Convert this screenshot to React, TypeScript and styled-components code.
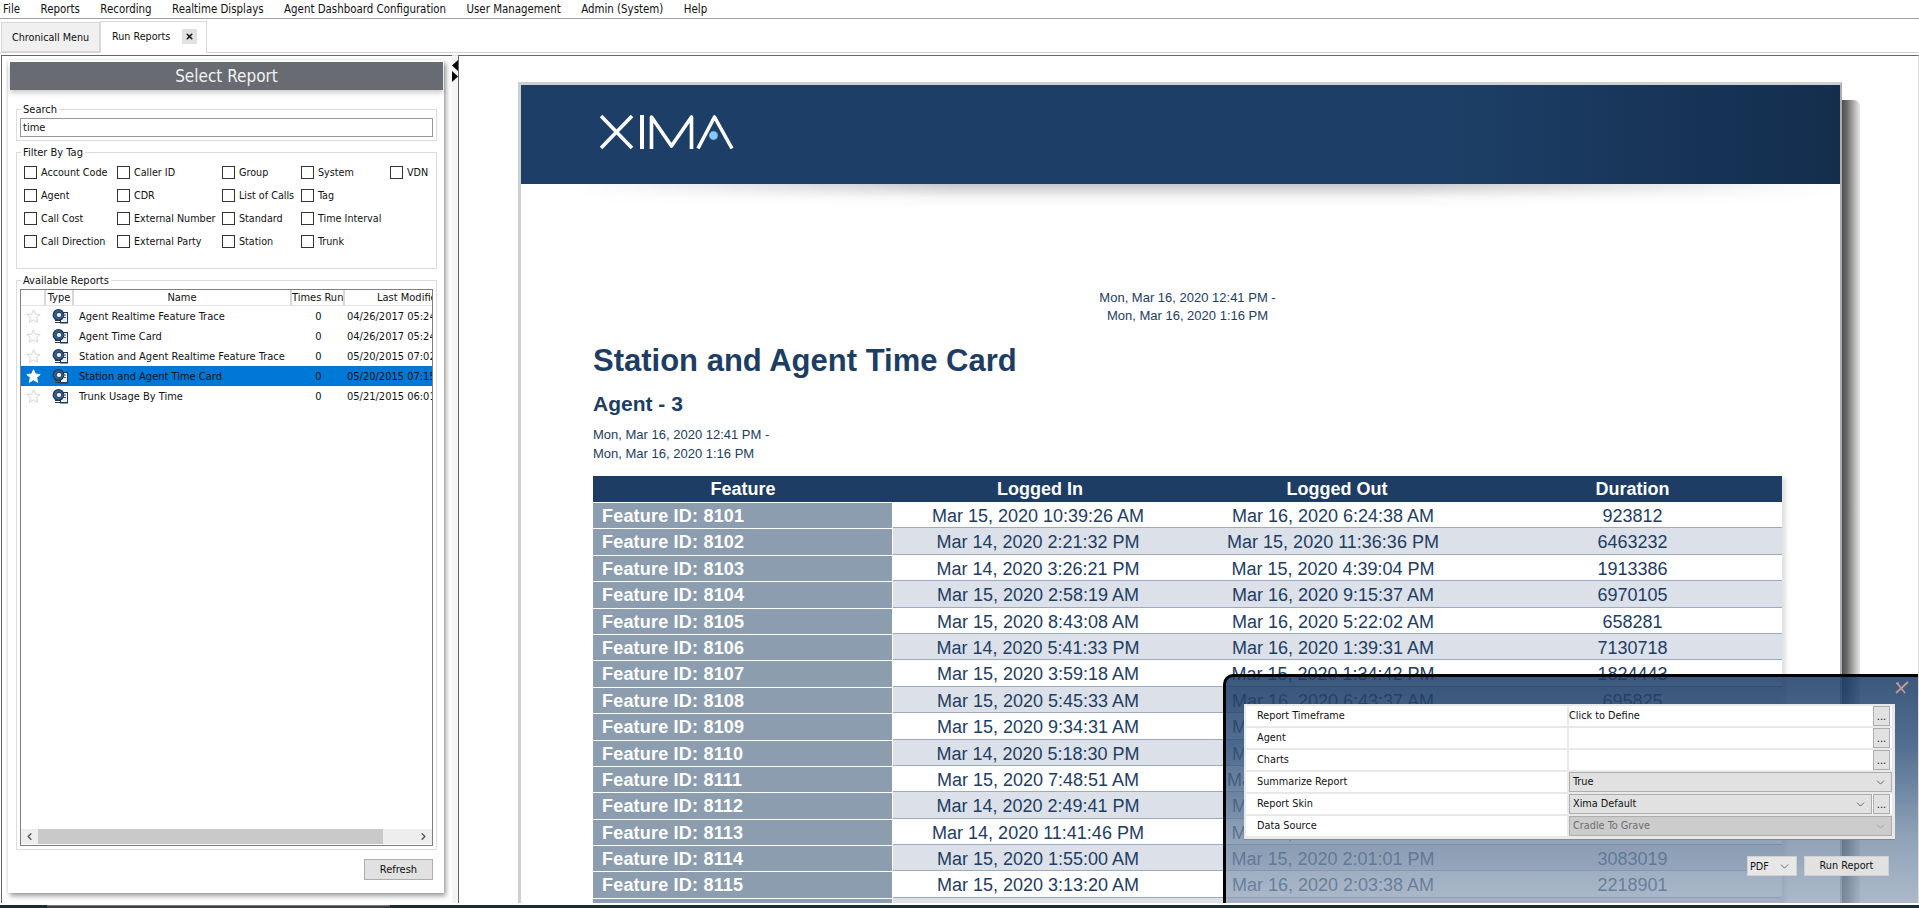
import React from "react";
import styled, { createGlobalStyle } from "styled-components";
import { ChevronDown, ChevronLeft, ChevronRight, X } from "lucide-react";

const UI_FONT = `"DejaVu Sans Condensed", "DejaVu Sans", sans-serif`;
const REPORT_FONT = `"Liberation Sans", Arial, sans-serif`;

const Global = createGlobalStyle`
  html, body { margin: 0; padding: 0; height: 100%; overflow: hidden; background: #fff; }
  #root { height: 100%; }
  * { box-sizing: border-box; }
`;

const Shell = styled.div`
  height: 908px;
  display: flex;
  flex-direction: column;
  font-family: ${UI_FONT};
  font-stretch: condensed;
  font-size: 11px;
  color: #111;
  background: #fff;
`;

const MenuBar = styled.nav`
  height: 19px;
  flex: none;
  display: flex;
  align-items: center;
  gap: 20.5px;
  padding-left: 3px;
  border-bottom: 1px solid #a0a0a0;
  font-size: 11.4px;
`;

const TabBar = styled.div`
  height: 34px;
  flex: none;
  display: flex;
  align-items: flex-end;
  padding-left: 1px;
  border-bottom: 1px solid #d4d4d4;
`;

const Tab = styled.div<{ $active?: boolean }>`
  display: flex;
  align-items: center;
  gap: 11px;
  white-space: nowrap;
  font-size: 10.7px;
  height: ${(p) => (p.$active ? "32px" : "30px")};
  width: ${(p) => (p.$active ? "107px" : "99px")};
  padding-left: ${(p) => (p.$active ? "11px" : "10px")};
  margin-bottom: ${(p) => (p.$active ? "-1px" : "0")};
  padding-bottom: ${(p) => (p.$active ? "3px" : "0")};
  background: ${(p) => (p.$active ? "#fff" : "#f0f0f0")};
  border: 1px solid #d9d9d9;
  border-bottom: ${(p) => (p.$active ? "none" : "1px solid #d9d9d9")};
`;

const TabClose = styled.span`
  width: 15px;
  height: 15px;
  margin-left: 1px;
  display: flex;
  align-items: center;
  justify-content: center;
  background: #e1e1e1;
`;

const Workspace = styled.main`
  flex: 1;
  min-height: 0;
  display: flex;
  padding: 2px 0 2px 1px;
`;

const LeftPane = styled.section`
  width: 451px;
  flex: none;
  border-top: 1px solid #666;
  border-left: 1px solid #666;
  padding: 4px 8px 10px 6px;
  display: flex;
  flex-direction: column;
`;

const Splitter = styled.div`
  width: 6px;
  flex: none;
  background: #f4f4f4;
  border-top: 1px solid #ddd;
  display: flex;
  flex-direction: column;
  padding-top: 4px;
`;

const Card = styled.div`
  flex: 1;
  min-height: 0;
  background: #fff;
  display: flex;
  flex-direction: column;
  padding: 2px 7px 13px 8px;
  box-shadow: 2px 3px 5px rgba(0, 0, 0, 0.38), 0 0 2px rgba(0, 0, 0, 0.12);
`;

const CardHeader = styled.h2`
  flex: none;
  height: 28px;
  margin: 0 -6px 12px -6px;
  background: #686b72;
  color: #f2f2f2;
  font-size: 17px;
  font-weight: 400;
  line-height: 28px;
  text-align: center;
  box-shadow: 0 3px 5px rgba(0, 0, 0, 0.2);
`;

const Group = styled.fieldset<{ $height?: number; $grow?: boolean }>`
  margin: 0 0 4px;
  padding: 2px 3px 3px;
  min-width: 0;
  border: 1px solid #dcdcdc;
  ${(p) => (p.$height ? `height: ${p.$height}px; flex: none;` : "")}
  ${(p) => (p.$grow ? "flex: 1; min-height: 0; display: flex; flex-direction: column; margin: 0;" : "")}
`;

const GroupTitle = styled.legend`
  padding: 0 2px;
  margin-left: 1px;
  height: 14px;
  line-height: 15px;
  font-size: 11px;
`;

const SearchInput = styled.input`
  display: block;
  width: 100%;
  height: 19px;
  border: 1px solid #999;
  padding: 0 2px;
  font: inherit;
  font-stretch: condensed;
  font-size: 11px;
  color: #111;
  outline: none;
`;

const TagGrid = styled.div`
  display: grid;
  grid-template-columns: 93px 105px 79px 89px auto;
  grid-auto-rows: 23px;
  padding-left: 4px;
  font-size: 10.7px;
`;

const Tag = styled.label`
  display: flex;
  align-items: center;
  gap: 4px;
  white-space: nowrap;
`;

const TagBox = styled.span`
  width: 13px;
  height: 13px;
  flex: none;
  background: #fff;
  border: 1px solid #333;
`;

const ListFrame = styled.div`
  flex: 1;
  min-height: 0;
  width: 413px;
  display: flex;
  flex-direction: column;
  overflow: hidden;
  border: 1px solid #7f7f7f;
`;

const listColumns = "25px 28px 218px 53px 132px";

const ListHead = styled.div`
  flex: none;
  display: grid;
  grid-template-columns: ${listColumns};
  width: 456px;
  height: 16px;
  border-bottom: 1px solid #e4e4e4;
`;

const HeadCell = styled.div`
  text-align: center;
  line-height: 15px;
  white-space: nowrap;
  overflow: hidden;
  border-right: 2px solid #d8d8d8;
`;

const ListRow = styled.div<{ $selected?: boolean }>`
  flex: none;
  display: grid;
  grid-template-columns: ${listColumns};
  width: 456px;
  height: 20px;
  align-items: center;
  background: ${(p) => (p.$selected ? "#0078d7" : "transparent")};
`;

const IconCell = styled.div`
  display: flex;
  justify-content: center;
  align-items: center;
`;

const NameCell = styled.div`
  padding-left: 5px;
  white-space: nowrap;
`;

const CountCell = styled.div`
  text-align: center;
`;

const DateCell = styled.div`
  padding-left: 2px;
  white-space: nowrap;
`;

const ListFill = styled.div`
  flex: 1;
`;

const HScroll = styled.div`
  flex: none;
  height: 15px;
  margin-bottom: 1px;
  display: flex;
  align-items: center;
  background: #eee;
`;

const ScrollEnd = styled.span`
  width: 17px;
  flex: none;
  display: flex;
  justify-content: center;
  color: #555;
`;

const ScrollThumb = styled.span`
  width: 345px;
  height: 15px;
  flex: none;
  background: #c9c9c9;
`;

const ScrollSpace = styled.span`
  flex: 1;
`;

const CardFooter = styled.div`
  flex: none;
  display: flex;
  justify-content: flex-end;
  padding: 9px 4px 0 0;
`;

const Button = styled.button<{ $width: number }>`
  width: ${(p) => p.$width}px;
  height: 21px;
  padding: 0;
  font-family: ${UI_FONT};
  font-stretch: condensed;
  font-size: 11px;
  color: #111;
  background: #e1e1e1;
  border: 1px solid #adadad;
`;

const ReportPane = styled.section`
  flex: 1;
  min-width: 0;
  position: relative;
  isolation: isolate;
  overflow: hidden;
  border-top: 1px solid #666;
  border-left: 1px solid #666;
  border-right: 1px solid #ddd;
  padding: 26px 0 0 59px;
  background: #fff;
`;

const Sheet = styled.article`
  position: relative;
  width: 1324px;
  min-height: 900px;
  background: #fff;
  border: 3px solid #cfcfcf;
  border-right: 2px solid #a9adb2;
  border-bottom: none;
  font-family: ${REPORT_FONT};
  font-stretch: normal;
  color: #1d3d64;

  &::before {
    content: "";
    position: absolute;
    z-index: -1;
    left: 100%;
    top: 15px;
    bottom: 0;
    width: 20px;
    border-radius: 0 6px 0 0;
    background: linear-gradient(90deg, #404040, #6d6d6d 35%, #a8a8a8 65%, #d4d4d4 88%, #e6e6e6);
  }
`;

const Banner = styled.header`
  position: relative;
  height: 99px;
  padding: 30px 0 0 79px;
  background: linear-gradient(90deg, #1d3f67 0%, #1d3f67 70%, #163355 90%, #142d4d 100%);

  &::after {
    content: "";
    position: absolute;
    top: 100%;
    left: 50px;
    right: 0;
    height: 24px;
    background: linear-gradient(180deg, rgba(0, 0, 0, 0.22), rgba(0, 0, 0, 0.03) 60%, transparent);
    mask-image: linear-gradient(90deg, transparent, #000 30%, #000 65%, transparent);
  }
`;

const SheetBody = styled.div`
  padding: 105px 58px 0 72px;
`;

const DateLines = styled.div<{ $center?: boolean }>`
  font-size: 13px;
  line-height: ${(p) => (p.$center ? "18px" : "19px")};
  text-align: ${(p) => (p.$center ? "center" : "left")};
  margin-top: ${(p) => (p.$center ? "0" : "9px")};
`;

const ReportTitle = styled.h1`
  margin: 19px 0 0;
  font-size: 31px;
  line-height: 34px;
  font-weight: 700;
`;

const ReportSubtitle = styled.h3`
  margin: 14px 0 0;
  font-size: 21px;
  line-height: 24px;
  font-weight: 700;
`;

const ReportTable = styled.div`
  margin-top: 13px;
  width: 1189px;
  box-shadow: 4px 2px 4px rgba(0, 0, 0, 0.12);
`;

const TableHead = styled.div`
  display: grid;
  grid-template-columns: 300px 294px 300px 291px;
  height: 26px;
  background: #1d3d64;
  color: #fff;
  font-size: 18px;
  font-weight: 700;
  line-height: 26px;
  text-align: center;
`;

const TableRow = styled.div<{ $alt: boolean }>`
  display: grid;
  grid-template-columns: 300px 290px 300px 299px;
  grid-template-rows: 25.4px;
  height: 26.4px;
  background: ${(p) => (p.$alt ? "#dce1e9" : "#fff")};
  font-size: 18px;
  line-height: 28px;
  text-align: center;
  border-bottom: 1px solid #9aabc0;
`;

const FeatureCell = styled.div`
  background: #8c9db0;
  color: #fff;
  font-weight: 700;
  letter-spacing: 0.2px;
  text-align: left;
  padding-left: 9px;
  margin-bottom: -1px;
  border-top: 1px solid #fff;
  border-right: 1px solid #fff;
  line-height: 26px;
`;

const ValueCell = styled.div`
  white-space: nowrap;
`;

const Drawer = styled.aside`
  position: absolute;
  left: 764px;
  right: -1px;
  top: 618px;
  bottom: 0;
  border: 3px solid #000;
  border-right: none;
  border-bottom: none;
  border-radius: 10px 0 0 0;
  padding: 27px 24px 0 18px;
  background: linear-gradient(180deg, rgba(28, 60, 102, 0.86) 0%, rgba(48, 82, 122, 0.84) 30%, rgba(108, 132, 160, 0.76) 70%, rgba(140, 158, 182, 0.72) 100%);
  font-family: ${UI_FONT};
  font-stretch: condensed;
  font-size: 10.8px;
  color: #111;
`;

const DrawerClose = styled.svg`
  position: absolute;
  top: 4px;
  right: 10px;
  width: 14px;
  height: 14px;
`;

const PropGrid = styled.div`
  display: grid;
  grid-template-columns: 321px 323px;
  grid-auto-rows: 20px;
  gap: 2px;
  width: 651px;
  padding: 2px 3px 3px 2px;
  background: #e9e9e9;
  box-shadow: 0 1px 0 #888;
`;

const PropLabel = styled.div`
  background: #fff;
  padding-left: 11px;
  line-height: 20px;
`;

const PropValue = styled.div`
  background: #fff;
  display: flex;
  line-height: 20px;
  min-width: 0;
`;

const ValueText = styled.span`
  flex: 1;
`;

const MoreButton = styled.span`
  width: 17px;
  height: 20px;
  flex: none;
  margin: 0 2px 0 1px;
  background: #e1e1e1;
  border: 1px solid #adadad;
  text-align: center;
  line-height: 20px;
  font-size: 11px;
`;

const Select = styled.div<{ $disabled?: boolean }>`
  flex: 1;
  min-width: 0;
  height: 20px;
  display: flex;
  align-items: center;
  justify-content: space-between;
  padding: 0 4px 0 3px;
  background: ${(p) => (p.$disabled ? "#cccccc" : "#e1e1e1")};
  color: ${(p) => (p.$disabled ? "#6d6d6d" : "#111")};
  border: 1px solid #adadad;
`;

const DrawerActions = styled.div`
  display: flex;
  justify-content: flex-end;
  gap: 7px;
  margin-top: 17px;
  padding-right: 6px;
  width: 651px;
`;

const FormatSelect = styled.div`
  width: 50px;
  height: 20px;
  display: flex;
  align-items: center;
  justify-content: space-between;
  padding: 0 5px 0 2px;
  background: #e7e7e7;
  border: 1px solid #d0d0d0;
`;

const RunButton = styled.div`
  width: 85px;
  height: 20px;
  background: #e1e1e1;
  border: 1px solid #d0d0d0;
  text-align: center;
  line-height: 18px;
`;

const TaskBar = styled.footer`
  flex: none;
  height: 3px;
  background: #1b2d33;
  display: flex;
  padding-left: 47px;
`;

const TaskItem = styled.span`
  width: 343px;
  background: #3a3f44;
  border-top: 1px solid #777;
`;

const Arrow: React.FC<{ left?: boolean }> = ({ left }) => (
  <svg width="6" height="11" viewBox="0 0 6 11">
    <polygon points={left ? "6,0 0,5.5 6,11" : "0,0 6,5.5 0,11"} fill="#000" />
  </svg>
);

const Star: React.FC<{ filled?: boolean }> = ({ filled }) => (
  <svg width="15" height="14" viewBox="0 0 15 14">
    <polygon
      points="7.5,0.8 9.4,5.1 14.2,5.5 10.6,8.6 11.7,13.3 7.5,10.8 3.3,13.3 4.4,8.6 0.8,5.5 5.6,5.1"
      fill={filled ? "#fff" : "#fbfbfb"}
      stroke={filled ? "#fff" : "#d6d6d6"}
      strokeWidth="1"
    />
  </svg>
);

const ReportIcon: React.FC = () => (
  <svg width="17" height="15" viewBox="0 0 17 15">
    <rect x="8.5" y="3.5" width="7" height="10.5" fill="#eef2f7" stroke="#26384f" />
    <path d="M3 11.5h6M3 13.5h12" stroke="#26384f" strokeWidth="1" />
    <circle cx="6.5" cy="6" r="5.3" fill="#2f5f93" stroke="#1e3550" strokeWidth="1.2" />
    <ellipse cx="7" cy="6" rx="2.8" ry="2.6" fill="#e4ecf4" stroke="#1e3550" strokeWidth="0.9" />
    <path d="M11 6h3M11 8.5h3" stroke="#46607c" strokeWidth="1" />
  </svg>
);

const Chevron: React.FC<{ muted?: boolean }> = ({ muted }) => (
  <ChevronDown size={13} strokeWidth={1.4} color={muted ? "#999" : "#444"} />
);

const Logo: React.FC = () => (
  <svg width="134" height="35" viewBox="0 0 134 35" fill="none" stroke="#fff" strokeWidth="3.6">
    <path d="M1 1l31 32M32 1L1 33" />
    <path d="M42 0v34" strokeWidth="4" />
    <path d="M51.5 34V2l20 29 20-29v32" strokeLinejoin="round" />
    <path d="M98 33.5L114.5 2 132 33.5" strokeLinejoin="round" />
    <circle cx="113.5" cy="20.5" r="4.8" fill="#86c9f2" stroke="#1d3f67" strokeWidth="1" />
  </svg>
);

const menus = ["File", "Reports", "Recording", "Realtime Displays", "Agent Dashboard Configuration", "User Management", "Admin (System)", "Help"];

const tags = [
  "Account Code", "Caller ID", "Group", "System", "VDN",
  "Agent", "CDR", "List of Calls", "Tag", "",
  "Call Cost", "External Number", "Standard", "Time Interval", "",
  "Call Direction", "External Party", "Station", "Trunk", "",
];

const reports = [
  { name: "Agent Realtime Feature Trace", date: "04/26/2017 05:24 PM" },
  { name: "Agent Time Card", date: "04/26/2017 05:24 PM" },
  { name: "Station and Agent Realtime Feature Trace", date: "05/20/2015 07:02 PM" },
  { name: "Station and Agent Time Card", date: "05/20/2015 07:15 PM", selected: true },
  { name: "Trunk Usage By Time", date: "05/21/2015 06:01 PM" },
];

const rows = [
  ["8101", "Mar 15, 2020 10:39:26 AM", "Mar 16, 2020 6:24:38 AM", "923812"],
  ["8102", "Mar 14, 2020 2:21:32 PM", "Mar 15, 2020 11:36:36 PM", "6463232"],
  ["8103", "Mar 14, 2020 3:26:21 PM", "Mar 15, 2020 4:39:04 PM", "1913386"],
  ["8104", "Mar 15, 2020 2:58:19 AM", "Mar 16, 2020 9:15:37 AM", "6970105"],
  ["8105", "Mar 15, 2020 8:43:08 AM", "Mar 16, 2020 5:22:02 AM", "658281"],
  ["8106", "Mar 14, 2020 5:41:33 PM", "Mar 16, 2020 1:39:31 AM", "7130718"],
  ["8107", "Mar 15, 2020 3:59:18 AM", "Mar 15, 2020 1:34:42 PM", "1824443"],
  ["8108", "Mar 15, 2020 5:45:33 AM", "Mar 16, 2020 6:43:37 AM", "695825"],
  ["8109", "Mar 15, 2020 9:34:31 AM", "Mar 16, 2020 3:12:40 AM", "2241190"],
  ["8110", "Mar 14, 2020 5:18:30 PM", "Mar 15, 2020 8:27:15 AM", "3180452"],
  ["8111", "Mar 15, 2020 7:48:51 AM", "Mar 15, 2020 11:20:14 PM", "1568230"],
  ["8112", "Mar 14, 2020 2:49:41 PM", "Mar 16, 2020 4:05:22 AM", "4405118"],
  ["8113", "Mar 14, 2020 11:41:46 PM", "Mar 15, 2020 6:52:09 PM", "2743906"],
  ["8114", "Mar 15, 2020 1:55:00 AM", "Mar 15, 2020 2:01:01 PM", "3083019"],
  ["8115", "Mar 15, 2020 3:13:20 AM", "Mar 16, 2020 2:03:38 AM", "2218901"],
  ["8116", "Mar 14, 2020 6:20:11 PM", "Mar 15, 2020 9:44:27 AM", "2541720"],
];

export default function App() {
  return (
    <Shell>
      <Global />
      <MenuBar>
        {menus.map((m) => (
          <span key={m}>{m}</span>
        ))}
      </MenuBar>
      <TabBar>
        <Tab>Chronicall Menu</Tab>
        <Tab $active>
          Run Reports
          <TabClose>
            <X size={9} strokeWidth={4} color="#111" />
          </TabClose>
        </Tab>
      </TabBar>
      <Workspace>
        <LeftPane>
          <Card>
            <CardHeader>Select Report</CardHeader>
            <Group $height={39}>
              <GroupTitle>Search</GroupTitle>
              <SearchInput defaultValue="time" />
            </Group>
            <Group $height={124}>
              <GroupTitle>Filter By Tag</GroupTitle>
              <TagGrid>
                {tags.map((t, i) =>
                  t ? (
                    <Tag key={t}>
                      <TagBox />
                      {t}
                    </Tag>
                  ) : (
                    <span key={i} />
                  )
                )}
              </TagGrid>
            </Group>
            <Group $grow>
              <GroupTitle>Available Reports</GroupTitle>
              <ListFrame>
                <ListHead>
                  <HeadCell />
                  <HeadCell>Type</HeadCell>
                  <HeadCell>Name</HeadCell>
                  <HeadCell>Times Run</HeadCell>
                  <HeadCell>Last Modified</HeadCell>
                </ListHead>
                {reports.map((r) => (
                  <ListRow key={r.name} $selected={r.selected}>
                    <IconCell>
                      <Star filled={r.selected} />
                    </IconCell>
                    <IconCell>
                      <ReportIcon />
                    </IconCell>
                    <NameCell>{r.name}</NameCell>
                    <CountCell>0</CountCell>
                    <DateCell>{r.date}</DateCell>
                  </ListRow>
                ))}
                <ListFill />
                <HScroll>
                  <ScrollEnd>
                    <ChevronLeft size={11} strokeWidth={3} />
                  </ScrollEnd>
                  <ScrollThumb />
                  <ScrollSpace />
                  <ScrollEnd>
                    <ChevronRight size={11} strokeWidth={3} />
                  </ScrollEnd>
                </HScroll>
              </ListFrame>
            </Group>
            <CardFooter>
              <Button $width={69}>Refresh</Button>
            </CardFooter>
          </Card>
        </LeftPane>
        <Splitter>
          <Arrow left />
          <Arrow />
        </Splitter>
        <ReportPane>
          <Sheet>
            <Banner>
              <Logo />
            </Banner>
            <SheetBody>
              <DateLines $center>
                Mon, Mar 16, 2020 12:41 PM -
                <br />
                Mon, Mar 16, 2020 1:16 PM
              </DateLines>
              <ReportTitle>Station and Agent Time Card</ReportTitle>
              <ReportSubtitle>Agent - 3</ReportSubtitle>
              <DateLines>
                Mon, Mar 16, 2020 12:41 PM -
                <br />
                Mon, Mar 16, 2020 1:16 PM
              </DateLines>
              <ReportTable>
                <TableHead>
                  <span>Feature</span>
                  <span>Logged In</span>
                  <span>Logged Out</span>
                  <span>Duration</span>
                </TableHead>
                {rows.map((r, i) => (
                  <TableRow key={r[0]} $alt={i % 2 === 1}>
                    <FeatureCell>Feature ID: {r[0]}</FeatureCell>
                    <ValueCell>{r[1]}</ValueCell>
                    <ValueCell>{r[2]}</ValueCell>
                    <ValueCell>{r[3]}</ValueCell>
                  </TableRow>
                ))}
              </ReportTable>
            </SheetBody>
          </Sheet>
          <Drawer>
            <DrawerClose viewBox="0 0 14 14" fill="none">
              <path d="M13 1L1 12M2 2l8 10M1 2.5l3-.5" stroke="#c49c9c" strokeWidth="1.7" />
            </DrawerClose>
            <PropGrid>
              <PropLabel>Report Timeframe</PropLabel>
              <PropValue>
                <ValueText>Click to Define</ValueText>
                <MoreButton>...</MoreButton>
              </PropValue>
              <PropLabel>Agent</PropLabel>
              <PropValue>
                <ValueText />
                <MoreButton>...</MoreButton>
              </PropValue>
              <PropLabel>Charts</PropLabel>
              <PropValue>
                <ValueText />
                <MoreButton>...</MoreButton>
              </PropValue>
              <PropLabel>Summarize Report</PropLabel>
              <PropValue>
                <Select>
                  True
                  <Chevron />
                </Select>
              </PropValue>
              <PropLabel>Report Skin</PropLabel>
              <PropValue>
                <Select>
                  Xima Default
                  <Chevron />
                </Select>
                <MoreButton>...</MoreButton>
              </PropValue>
              <PropLabel>Data Source</PropLabel>
              <PropValue>
                <Select $disabled>
                  Cradle To Grave
                  <Chevron muted />
                </Select>
              </PropValue>
            </PropGrid>
            <DrawerActions>
              <FormatSelect>
                PDF
                <Chevron />
              </FormatSelect>
              <RunButton>Run Report</RunButton>
            </DrawerActions>
          </Drawer>
        </ReportPane>
      </Workspace>
      <TaskBar>
        <TaskItem />
      </TaskBar>
    </Shell>
  );
}
